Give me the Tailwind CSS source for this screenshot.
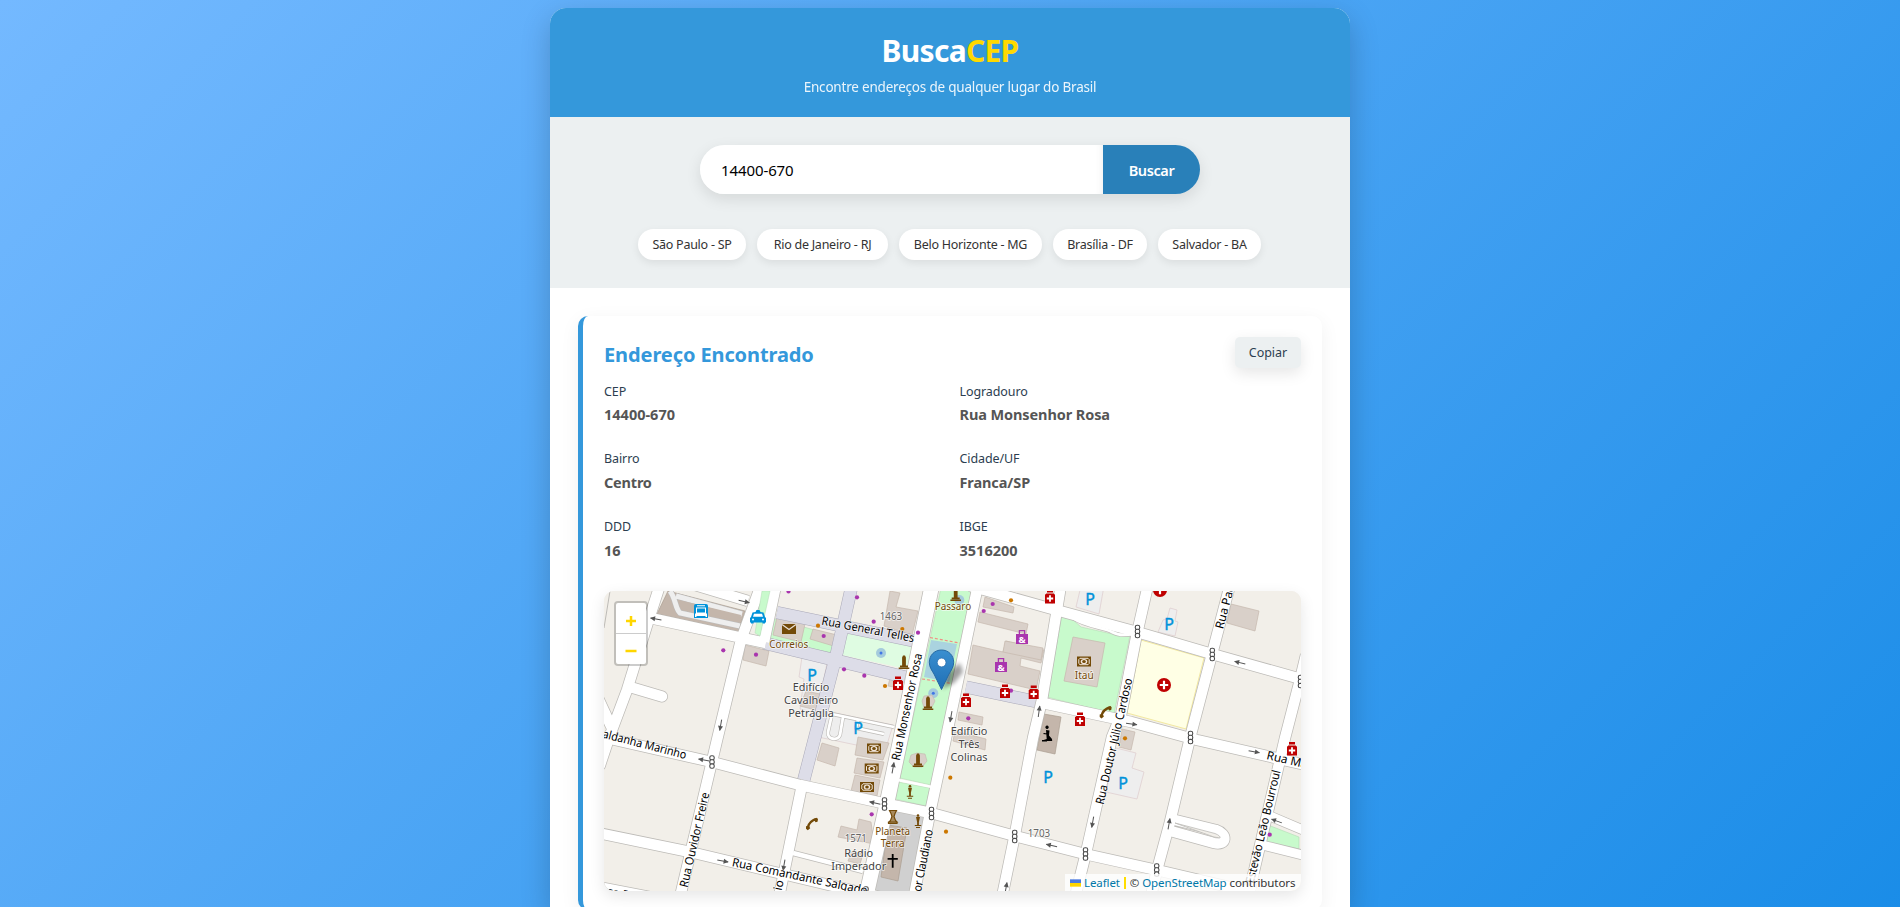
<!DOCTYPE html>
<html lang="pt-BR">
<head>
<meta charset="utf-8">
<title>BuscaCEP</title>
<script src="https://cdn.jsdelivr.net/npm/@tailwindcss/browser@4"></script>
</head>
<body class="h-[907px] overflow-hidden bg-linear-135/srgb from-[#74b9ff] to-[#0984e3] bg-[length:1900px_1450px] pt-2 font-['Noto_Sans',sans-serif] text-[#2d3436]">
<main class="mx-auto h-[899px] w-[800px] overflow-hidden rounded-t-[16px] bg-white shadow-[0_10px_30px_rgba(0,0,0,0.2)]">
  <header class="flex h-[109px] flex-col items-center bg-[#3498db] pt-[21px] text-white">
    <h1 class="text-[30px] leading-[44px] font-bold tracking-[-0.7px]">Busca<span class="text-[#ffd900]">CEP</span></h1>
    <p class="mt-[4px] text-[13.5px] leading-[20px] tracking-[-0.2px] opacity-90">Encontre endereços de qualquer lugar do Brasil</p>
  </header>

  <section class="flex h-[171px] flex-col items-center bg-[#ecf0f1] pt-7">
    <form class="flex h-[49px] w-[500px] overflow-hidden rounded-full shadow-[0_5px_15px_rgba(0,0,0,0.1)]">
      <div class="flex flex-1 items-center bg-white pt-[2px] pl-[21px] text-[15px] tracking-[-0.1px] text-black shadow-[inset_-8px_0_8px_-8px_rgba(0,0,0,0.08)]">14400-670</div>
      <button type="button" class="w-[97px] bg-[#2980b9] pt-[2px] text-[14.5px] font-semibold tracking-[-0.4px] text-white">Buscar</button>
    </form>
    <div class="mt-[35px] mr-[1px] flex gap-[11px] text-[12.5px] tracking-[-0.25px] text-[#333]">
      <span class="flex h-[31px] w-[108px] items-center justify-center rounded-full bg-white pt-[2px] whitespace-nowrap shadow-[0_3px_8px_rgba(0,0,0,0.08)]">São Paulo - SP</span>
      <span class="flex h-[31px] w-[131px] items-center justify-center rounded-full bg-white pt-[2px] whitespace-nowrap shadow-[0_3px_8px_rgba(0,0,0,0.08)]">Rio de Janeiro - RJ</span>
      <span class="flex h-[31px] w-[143px] items-center justify-center rounded-full bg-white pt-[2px] whitespace-nowrap shadow-[0_3px_8px_rgba(0,0,0,0.08)]">Belo Horizonte - MG</span>
      <span class="flex h-[31px] w-[94px] items-center justify-center rounded-full bg-white pt-[2px] whitespace-nowrap shadow-[0_3px_8px_rgba(0,0,0,0.08)]">Brasília - DF</span>
      <span class="flex h-[31px] w-[103px] items-center justify-center rounded-full bg-white pt-[2px] whitespace-nowrap shadow-[0_3px_8px_rgba(0,0,0,0.08)]">Salvador - BA</span>
    </div>
  </section>

  <section class="px-7 pt-7">
    <article class="h-[594px] rounded-[10px] border-l-[5px] border-[#3498db] bg-white pt-[21px] pr-[21px] pl-[21px] shadow-[0_5px_20px_rgba(0,0,0,0.06)]">
      <div class="flex h-[43px] items-start justify-between">
        <h2 class="pt-[3px] text-[20px] leading-[29px] font-bold tracking-[-0.1px] text-[#3498db]">Endereço Encontrado</h2>
        <button type="button" class="h-[31px] w-[66px] rounded-[5px] bg-[#ecf0f1] pt-[2px] text-[12.5px] tracking-[-0.05px] text-[#2c3e50] shadow-[0_5px_15px_rgba(0,0,0,0.1)]">Copiar</button>
      </div>
      <dl class="grid grid-cols-2 gap-x-[14px] text-[#2c3e50]">
        <div class="h-[67px]"><dt class="pt-[1px] text-[12.5px] leading-[22px] tracking-[-0.1px]">CEP</dt><dd class="text-[14.5px] leading-[23px] font-bold text-[#555]">14400-670</dd></div>
        <div class="h-[67px]"><dt class="pt-[1px] text-[12.5px] leading-[22px] tracking-[-0.1px]">Logradouro</dt><dd class="text-[14.5px] leading-[23px] font-bold tracking-[-0.1px] text-[#555]">Rua Monsenhor Rosa</dd></div>
        <div class="h-[68px]"><dt class="pt-[1px] text-[12.5px] leading-[22px] tracking-[-0.1px]">Bairro</dt><dd class="text-[14.5px] leading-[25px] font-bold tracking-[-0.2px] text-[#555]">Centro</dd></div>
        <div class="h-[68px]"><dt class="pt-[1px] text-[12.5px] leading-[22px] tracking-[-0.1px]">Cidade/UF</dt><dd class="text-[14.5px] leading-[25px] font-bold tracking-[-0.1px] text-[#555]">Franca/SP</dd></div>
        <div class="h-[76px]"><dt class="pt-[1px] text-[12.5px] leading-[22px] tracking-[-0.1px]">DDD</dt><dd class="text-[14.5px] leading-[24px] font-bold text-[#555]">16</dd></div>
        <div class="h-[76px]"><dt class="pt-[1px] text-[12.5px] leading-[22px] tracking-[-0.1px]">IBGE</dt><dd class="text-[14.5px] leading-[24px] font-bold text-[#555]">3516200</dd></div>
      </dl>

      <div class="relative h-[300px] overflow-hidden rounded-[10px] bg-[#f2efe9] shadow-[0_5px_15px_rgba(0,0,0,0.1)]">
        <svg class="block h-[300px] w-[697px]" viewBox="604 591 697 300" font-family="Noto Sans, sans-serif">
          <defs>
            <g id="arL"><path d="M-5.5 0H5.5" stroke="#555" stroke-width="1"/><path d="M-6 0l5-2.5v5z" fill="#555"/></g>
            <g id="tl" fill="#fff" stroke="#4a4a4a" stroke-width="1.1"><rect x="-2.2" y="-6.3" width="4.4" height="4.4" rx="1.8"/><rect x="-2.2" y="-2.2" width="4.4" height="4.4" rx="1.8"/><rect x="-2.2" y="1.9" width="4.4" height="4.4" rx="1.8"/></g>
            <g id="ph"><path d="M-3-7h6v2.6h-6zM-3.6-3.6h7.2L5-2.2V6.5H-5V-2.2z" fill="#bf0000"/><path d="M-.9-1.8H.9V.6H3.2V2.4H.9V4.8H-.9V2.4H-3.2V.6H-.9z" fill="#fff"/></g>
            <g id="hs"><circle r="7" fill="#bf0000"/><path d="M-1.1-4.2H1.1V-1.1H4.2V1.1H1.1V4.2H-1.1V1.1H-4.2V-1.1H-1.1z" fill="#fff"/></g>
            <g id="bk"><rect x="-7" y="-5" width="14" height="10" fill="#734a08"/><path d="M-4-3.2H4L5.2-2V2L4 3.200H-4L-5.200 2V-2z" fill="none" stroke="#f0e6dc" stroke-width="1"/><ellipse rx="3.300" ry="2.600" fill="#f0e6dc"/><ellipse rx="1.800" ry="1.500" fill="#734a08"/></g>
            <g id="ft"><circle r="5" fill="#a5cbdc"/><circle r="1.5" fill="#4176e6"/></g>
            <g id="st" fill="#734a08"><path d="M-1.9 4V-4.5L-1-6.500H1L1.900-4.500V4zM-4 3.400h8v1.800h-8zM-5.300 5.400H5.300V7H-5.300z"/></g>
            <g id="bs" fill="#734a08"><circle cy="-5.5" r="1.3"/><path d="M-2-4h4L.9 1v3H-.9V1zM-3.200 4h6.400v1h-6.400zM-2 6h4v1h-4z"/></g>
            <g id="sh"><path d="M-2.600-2.500V-6.300H2.600V-2.500" fill="none" stroke="#a935ae" stroke-width="1.300"/><rect x="-6" y="-3" width="12" height="10" fill="#a935ae"/><text y="5.600" text-anchor="middle" font-size="9.500" font-weight="700" fill="#fff">&amp;</text></g>
            <g id="tp"><path d="M-4.500 4.500C-3.500 0 0-3.500 4.500-4.500" fill="none" stroke="#734a08" stroke-width="2.400"/><path d="M1.500-5l3.500-1 1 1.500-.5 2.500-2 .5zM-6 2.500l3-.5 1.200 2.500L-4.200 6.500-6 5z" fill="#734a08"/></g>
          </defs>

          <rect x="604" y="591" width="697" height="300" fill="#f2efe9"/>

          <!-- green spaces and plots -->
          <g fill="#c8facc" stroke="#b3dcb6" stroke-width=".6">
            <path d="M941 588h31L931 785l-31-7z"/><path d="M898 782l32 6-4 18-31-7z"/>
            <path d="M1062 615l9 3 10 9 31 7 8-2 10 3-16 79-67-17z"/>
            <path d="M768 617l75 21-6 16-72-15z"/>
            <path d="M1268 825l31 12v12l-35-7z"/>
          </g>
          <path d="M847 632l65 13-5 24-65-14z" fill="#dffce2"/>
          <path d="M1141 640l63 18-18 71-59-16z" fill="#ffffe5" stroke="#f3e9a0" stroke-width="1"/>
          <path d="M890 810l34 7-13 75h-36z" fill="#d0d0d0"/>
          <path d="M931 640l26 4-8 38-25-5z" fill="#aad3df"/>
          <path d="M930 637.500l32 6M922 679l33 5" stroke="#f08f86" stroke-width="1.200" stroke-dasharray="3 2"/>

          <!-- parking areas -->
          <g fill="#eeeeee" stroke="#e0cfd0" stroke-width=".8">
            <path d="M802 657l25 6-10 50-17-4 4-30-5-2z"/>
            <path d="M826 711l67 14-8 26-67-14z"/>
            <path d="M1081 586h23l-5 28-23-7z"/>
            <path d="M1170 608l7 2-2 11 3 1-3 14-17-4 5-12 4-1z"/>
            <path d="M1116 748l20 5-4 15 12 4-7 27-31-7z"/>
          </g>

          <!-- buildings -->
          <g fill="#d9d0c9" stroke="#c5b8ae" stroke-width=".7">
            <path d="M777 617l28 7-4 18-28-7z"/><path d="M813 629l28 7-4 11-27-8z"/><path d="M745 645l24 6-3 15-23-6z"/>
            <path d="M806 691l14 3-4 16-16-4z"/>
            <path d="M890 591l10 2-4 14 22 4-6 24-28-9z"/><path d="M890 678l6 1-2 8-6-1z"/>
            <path d="M985 597l29 10-1 6-30-6zM980 612l48 12-2 10-48-12zM973 645l30 7 3-11 38 9-3 13-20-5-1 8 20 5-4 19-68-16z"/>
            <path d="M1005 641l38 7-2 12-38-8z"/>
            <path d="M1073 637l32 6-8 44-33-6z"/>
            <path d="M959 712l24 5-1 8-24-5zM955 731l31 8-1 11-32-9z"/>
            <path d="M822 743l17 5-4 18-18-6zM858 737l31 6-6 17-28-5zM857 758l27 4-4 16-26-5zM855 775l25 5-3 16-26-5z"/>
            <path d="M859 819l12 3 3 22-36-7 3-11 16 4zM852 851l11 3-3 10-12-3z"/>
            <path d="M1231 604l28 7-4 20-28-8z"/><path d="M1122 729l13 3-4 18-12-3z"/>
          </g>
          <g fill="#c4b6ab" stroke="#ab9d90" stroke-width=".7">
            <path d="M668 591l77 20-7 21-81-18z"/><path d="M888 825l19 3-9 53-17-4z"/><path d="M1044 714l17 3-6 37-18-4z"/>
          </g>
          <path d="M670 591c6 8 5 17 10 22l60 13M676 596l66 18" fill="none" stroke="#bbb" stroke-width="6"/>
          <path d="M670 591c6 8 5 17 10 22l60 13M676 596l66 18" fill="none" stroke="#eee" stroke-width="5"/>
          <path d="M679 600l62 15-1 6-59-13z" fill="#c4b6ab"/>

          <!-- pedestrian streets -->
          <g fill="none" stroke="#aaa9b8" stroke-width="13">
            <path d="M777 612.500L914 641M764 643L905 677M966 687L1038 702M852 585L837 652L803 783"/>
          </g>
          <g fill="none" stroke="#dddde8" stroke-width="12">
            <path d="M777 612.500L914 641M764 643L905 677M966 687L1038 702M852 585L837 652L803 783"/>
          </g>

          <!-- street casings -->
          <g fill="none" stroke="#bdbbb7" stroke-linejoin="round">
            <g stroke-width="12">
              <path d="M660 585L648 622 627 690 609 738 600 765M598 698L611 726M630 687L662 696.500" stroke-linecap="round"/>
              <path d="M650 618L766 643M695 585L748 601M761 585L741 640 717 740 680 897M776 585L764 642"/>
              <path d="M970 586L1056 610 1137 632 1212 654 1301 679M1038 702L1131 722 1197 740 1306 765"/>
              <path d="M598 736L712 762 800 785 887 804 931 813 1015 836 1085 854 1157 870 1255 893"/>
              <path d="M598 833L690 852 787 875 880 897M598 887L650 897"/>
              <path d="M978 585L946 738 930 813 914 896M1061 585L1042 700 1033 738 1015 834 1002 897M1148 585L1136 638 1121 715 1112 737 1086 853 1075 897M1230 585L1212 654 1190 738 1170 822 1157 870 1151 896M1306 655L1300 680 1285 738 1248 897M802 785L779 897"/>
              <path d="M1171 819L1216 830C1228 834 1227 846 1214 843L1167 830"/>
            </g>
            <path d="M932 585L901 737 887 803 866 897" stroke-width="16"/>
            <path d="M1270 816L1303 830M1262 845L1303 855" stroke-width="10.500"/>
            <path d="M793 853L863 871" stroke-width="6"/>
            <path d="M832 714L828 732C827 740 838 741 840 735L843 717M832 714L894 727M858 720L856 728 884 734" stroke-width="4"/>
            <path d="M1073 618C1083 626 1105 628 1112 632S1128 635 1133 634" stroke-width="4"/>
          </g>
          <g fill="none" stroke="#fff" stroke-linejoin="round">
            <g stroke-width="10.500">
              <path d="M660 585L648 622 627 690 609 738 600 765M598 698L611 726M630 687L662 696.500" stroke-linecap="round"/>
              <path d="M650 618L766 643M695 585L748 601M761 585L741 640 717 740 680 897M776 585L764 642"/>
              <path d="M970 586L1056 610 1137 632 1212 654 1301 679M1038 702L1131 722 1197 740 1306 765"/>
              <path d="M598 736L712 762 800 785 887 804 931 813 1015 836 1085 854 1157 870 1255 893"/>
              <path d="M598 833L690 852 787 875 880 897M598 887L650 897"/>
              <path d="M978 585L946 738 930 813 914 896M1061 585L1042 700 1033 738 1015 834 1002 897M1148 585L1136 638 1121 715 1112 737 1086 853 1075 897M1230 585L1212 654 1190 738 1170 822 1157 870 1151 896M1306 655L1300 680 1285 738 1248 897M802 785L779 897"/>
              <path d="M1171 819L1216 830C1228 834 1227 846 1214 843L1167 830"/>
            </g>
            <path d="M932 585L901 737 887 803 866 897" stroke-width="14.500"/>
            <path d="M1270 816L1303 830M1262 845L1303 855" stroke-width="9"/>
            <path d="M793 853L863 871" stroke-width="4.500"/>
            <path d="M832 714L828 732C827 740 838 741 840 735L843 717M832 714L894 727M858 720L856 728 884 734" stroke-width="2.800"/>
            <path d="M1073 618C1083 626 1105 628 1112 632S1128 635 1133 634" stroke-width="2.800"/>
            <path d="M898 780l34 7" stroke-width="2.500"/>
          </g>
          <path d="M1175 823L1215 833.500Q1221 836 1220 838L1214 837z" fill="#f2efe9" stroke="#bdbbb7" stroke-width=".8"/>
          <path d="M610 591L604 628" stroke="#bdbbb7" stroke-width="1"/>
          <path d="M762 591h8l-10 45-5-3z" fill="#c8facc" stroke="#b3dcb6" stroke-width=".5"/>

          <!-- direction arrows -->
          <use href="#arL" transform="translate(656 619) rotate(10)"/><use href="#arL" transform="translate(704 760) rotate(10)"/><use href="#arL" transform="translate(875 803) rotate(12)"/><use href="#arL" transform="translate(1051.700 845.500) rotate(12)"/><use href="#arL" transform="translate(1240 662.700) rotate(14)"/><use href="#arL" transform="translate(1276.700 821) rotate(20)"/>
          <use href="#arL" transform="translate(744 601.500) rotate(192)"/><use href="#arL" transform="translate(722.700 861) rotate(190)"/><use href="#arL" transform="translate(1131.500 724) rotate(188)"/><use href="#arL" transform="translate(1254 751.700) rotate(190)"/>
          <use href="#arL" transform="translate(720.700 725) rotate(-80)"/><use href="#arL" transform="translate(784 865) rotate(-80)"/><use href="#arL" transform="translate(951 716.500) rotate(-80)"/><use href="#arL" transform="translate(1092.700 822) rotate(-80)"/>
          <use href="#arL" transform="translate(893 768) rotate(100)"/><use href="#arL" transform="translate(1006 888) rotate(100)"/><use href="#arL" transform="translate(1039 711.500) rotate(98)"/><use href="#arL" transform="translate(1169 824) rotate(100)"/>

          <!-- traffic signals -->
          <use href="#tl" x="712" y="762"/><use href="#tl" x="884.500" y="804"/><use href="#tl" x="931.500" y="813.500"/><use href="#tl" x="1014.700" y="836.500"/><use href="#tl" x="1085.500" y="854"/><use href="#tl" x="1156.700" y="870"/><use href="#tl" x="1137.500" y="631.500"/><use href="#tl" x="1212.300" y="654.500"/><use href="#tl" x="1300.500" y="681.500"/><use href="#tl" x="1190.500" y="737.500"/><use href="#tl" x="866" y="893"/>

          <!-- shops and offices -->
          <g fill="#a935ae"><circle cx="788.500" cy="591.500" r="2.100"/><circle cx="723.300" cy="650.300" r="2.100"/><circle cx="756" cy="654.700" r="2.100"/><circle cx="823.700" cy="636" r="2.100"/><circle cx="857" cy="597.300" r="2.100"/><circle cx="873.700" cy="621.700" r="2.100"/><circle cx="918" cy="632.700" r="2.100"/><circle cx="844" cy="669.300" r="2.100"/><circle cx="864.300" cy="675.700" r="2.100"/><circle cx="992.700" cy="604" r="2.100"/><circle cx="983.700" cy="611" r="2.100"/><circle cx="1011" cy="690.700" r="2.100"/><circle cx="968.300" cy="718.300" r="2.100"/><circle cx="871.700" cy="814.300" r="2.100"/><circle cx="1269.700" cy="834.700" r="2.100"/></g>
          <g fill="#cc7700"><circle cx="818" cy="625.700" r="2.100"/><circle cx="902.300" cy="629" r="2.100"/><circle cx="885" cy="686" r="2.100"/><circle cx="1011" cy="600.300" r="2.100"/><circle cx="950.300" cy="777.700" r="2.100"/><circle cx="946" cy="831.700" r="2.100"/><circle cx="1125" cy="738.300" r="2.100"/></g>

          <!-- fountains and monuments -->
          <circle cx="959.300" cy="600" r="5" fill="#a5cbdc"/><use href="#ft" x="881" y="653"/><use href="#ft" x="933.300" y="693.300"/>
          <g fill="#d9d0c9" stroke="#c5b8ae" stroke-width=".6"><path d="M924 696l8-1 3 6-4 8-7-1-2-7z"/><path d="M911 755l6-2 8 1 2 7-5 6h-8l-5-5z"/></g>
          <use href="#st" x="904" y="662"/><use href="#st" x="928" y="703"/><use href="#st" x="955.700" y="594"/><use href="#st" x="918" y="760"/>
          <use href="#bs" x="910" y="791.700"/><use href="#bs" x="918" y="821"/>
          <path d="M889.500 810.500h7l-1.500 3-1 3 1.500 4 1.500 1.500h-8l1.500-1.500 1.500-4-1-3zM888.500 822h8.500v1.500h-8.500z" fill="#a98a5c" stroke="#734a08" stroke-width="1.200"/>

          <!-- points of interest -->
          <use href="#ph" x="898" y="683.500"/><use href="#ph" x="966" y="700.500"/><use href="#ph" x="1005" y="691.500"/><use href="#ph" x="1050" y="597"/><use href="#ph" x="1033.700" y="692.500"/><use href="#ph" x="1080" y="719.500"/><use href="#ph" x="1292" y="749"/>
          <use href="#hs" x="1164" y="685"/><use href="#hs" x="1160" y="590"/>
          <use href="#bk" x="874" y="748.500"/><use href="#bk" x="871.700" y="768.500"/><use href="#bk" x="867" y="787"/><use href="#bk" x="1084" y="661.500"/>
          <use href="#sh" x="1001" y="665"/><use href="#sh" x="1022" y="637"/>
          <use href="#tp" x="812" y="823.700"/><use href="#tp" x="1105.700" y="712"/>
          <g fill="#0092da">
            <path d="M696 604h10q2 0 2 2v12h-14v-12q0-2 2-2z"/>
            <path d="M755.500 612l1-2h3l1 2 3 .5 1.500 4.500 1 1v4.500h-1v1h-2.500v-1h-9v1H751v-1h-1v-4.500l1-1 1.500-4.500z"/>
          </g>
          <path d="M697 605.300h8v1h-8zM696 607.500h10v6h1v3.500h-1.500v-1h-9v1H695v-3.500h1z" fill="#fff"/><path d="M697 608.500h8v4h-8z" fill="#0092da"/>
          <path d="M754 613.800h8l1 3h-10z" fill="#fff"/><circle cx="753" cy="619.500" r="1" fill="#fff"/><circle cx="763" cy="619.500" r="1" fill="#fff"/>
          <rect x="782" y="624" width="14" height="10" fill="#734a08"/><path d="M782 624.500l7 5 7-5" fill="none" stroke="#e8dfd6" stroke-width="1.300"/>
          <path d="M891.800 854h1.800v4h4.200v1.800h-4.200v8h-1.800v-8h-4.200V858h4.200z" fill="#000"/>
          <path d="M1047 729a1.700 1.700 0 1 1 .1 0zM1046 730l3.500.5-.5 5 3 3.500.2 2h-7.500l-1-1 3-1zM1044 733l3 .5v1l-4-.5zM1042 740h5v1.500h-5z" fill="#000"/>

          <g font-size="16" fill="#0092da" stroke="#0092da" stroke-width=".4" text-anchor="middle"><text x="812" y="681">P</text><text x="858" y="734.300">P</text><text x="1090" y="605">P</text><text x="1169" y="630">P</text><text x="1048" y="783">P</text><text x="1123" y="789">P</text></g>

          <!-- street names -->
          <g font-size="11.800" fill="#000" stroke="#fff" stroke-opacity=".75" stroke-width="1.400" paint-order="stroke">
            <text transform="translate(821 624.500) rotate(10.800)" textLength="94" lengthAdjust="spacingAndGlyphs">Rua General Telles</text>
            <text transform="translate(899.500 761) rotate(-78)" textLength="109" lengthAdjust="spacingAndGlyphs">Rua Monsenhor Rosa</text>
            <text transform="translate(687.500 888) rotate(-77)" textLength="97" lengthAdjust="spacingAndGlyphs">Rua Ouvidor Freire</text>
            <text transform="translate(602 737.500) rotate(14.500)" textLength="86" lengthAdjust="spacingAndGlyphs">aldanha Marinho</text>
            <text transform="translate(731.500 866) rotate(12)" textLength="138" lengthAdjust="spacingAndGlyphs">Rua Comandante Salgado</text>
            <text transform="translate(781.500 891) rotate(-78)">io</text>
            <text transform="translate(921 892) rotate(-79)" textLength="63" lengthAdjust="spacingAndGlyphs">or Claudiano</text>
            <text transform="translate(1103.500 805) rotate(-77)" textLength="129" lengthAdjust="spacingAndGlyphs">Rua Doutor Júlio Cardoso</text>
            <text transform="translate(1223 629.500) rotate(-75)">Rua Pac</text>
            <text transform="translate(1266 759) rotate(13)">Rua Ma</text>
            <text transform="translate(1253.500 884) rotate(-76.500)" textLength="116" lengthAdjust="spacingAndGlyphs">Estevão Leão Bourroul</text>
            <text transform="translate(601 894) rotate(11)">ssa R</text>
          </g>

          <!-- place names -->
          <g text-anchor="middle" stroke="#fff" stroke-opacity=".7" stroke-width="1.600" paint-order="stroke">
            <g fill="#734a08" font-size="10.500">
              <text x="788.700" y="648" textLength="39" lengthAdjust="spacingAndGlyphs">Correios</text><text x="953" y="610" textLength="36.500" lengthAdjust="spacingAndGlyphs">Passaro</text><text x="1084.300" y="678.500" textLength="19" lengthAdjust="spacingAndGlyphs">Itaú</text>
              <text x="892.700" y="835" textLength="35" lengthAdjust="spacingAndGlyphs">Planeta</text><text x="892.700" y="847" textLength="24" lengthAdjust="spacingAndGlyphs">Terra</text>
            </g>
            <g fill="#444" font-size="11">
              <text x="811" y="691" textLength="36.500" lengthAdjust="spacingAndGlyphs">Edifício</text><text x="811" y="704.200" textLength="54" lengthAdjust="spacingAndGlyphs">Cavalheiro</text><text x="811" y="717.300" textLength="45.500" lengthAdjust="spacingAndGlyphs">Petráglia</text>
              <text x="969" y="734.500" textLength="36.500" lengthAdjust="spacingAndGlyphs">Edifício</text><text x="969" y="747.600" textLength="21" lengthAdjust="spacingAndGlyphs">Três</text><text x="969" y="761" textLength="37" lengthAdjust="spacingAndGlyphs">Colinas</text>
              <text x="858.700" y="856.700" textLength="29" lengthAdjust="spacingAndGlyphs">Rádio</text><text x="858.700" y="869.500" textLength="55" lengthAdjust="spacingAndGlyphs">Imperador</text>
            </g>
            <g fill="#666" font-size="10"><text x="891" y="620" textLength="22.500" lengthAdjust="spacingAndGlyphs">1463</text><text x="855.700" y="841.700" textLength="22" lengthAdjust="spacingAndGlyphs">1571</text><text x="1039" y="837" textLength="22.500" lengthAdjust="spacingAndGlyphs">1703</text></g>
          </g>

          <!-- location marker -->
          <defs>
            <linearGradient id="pin" x1="0" y1="0" x2="0" y2="1"><stop offset="0" stop-color="#3a8fd0"/><stop offset="1" stop-color="#1f6fb5"/></linearGradient>
            <filter id="soft" x="-50%" y="-50%" width="200%" height="200%"><feGaussianBlur stdDeviation="2.200"/></filter>
          </defs>
          <path d="M942 689l6-17 12-9 3 9-9 11z" fill="#000" opacity=".38" filter="url(#soft)"/>
          <path d="M941.500 650C934.500 650 929.300 655.400 929.300 662.200c0 5 2.400 7.800 4.700 11.800l7.500 15.500 7.500-15.500c2.300-4 4.700-6.800 4.700-11.800C953.700 655.400 948.500 650 941.500 650z" fill="url(#pin)" stroke="#2569a3" stroke-width="1"/>
          <circle cx="941.600" cy="662.500" r="4.400" fill="#fff" stroke="#2a6fae" stroke-width=".8"/>
        </svg>

        <div class="absolute top-[10px] left-[10px] flex w-[34px] flex-col rounded-[4px] border-2 border-black/20 bg-white bg-clip-padding">
          <button type="button" class="flex h-[31px] items-center justify-center border-b border-[#ccc] pt-[5px]" aria-label="Aproximar"><svg class="size-3" viewBox="0 0 12 12"><path d="M6 1v10M1 6h10" stroke="#ffd600" stroke-width="2.500"/></svg></button>
          <button type="button" class="flex h-[30px] items-center justify-center pt-[4px]" aria-label="Afastar"><svg class="size-3" viewBox="0 0 12 12"><path d="M.5 6h11" stroke="#ffd600" stroke-width="2.500"/></svg></button>
        </div>
        <div class="absolute right-0 bottom-0 flex h-[17px] w-[236px] items-center bg-white/80 pl-[5px] text-[11.5px] tracking-[-0.1px] whitespace-nowrap text-[#333]">
          <svg class="mr-[3px] h-2 w-[11px]" viewBox="0 0 12 8"><path fill="#4c7be1" d="M0 0h12v4H0z"/><path fill="#ffd500" d="M0 4h12v4H0z"/></svg>
          <span class="text-[#0078a8]">Leaflet</span><span class="mx-[4px] h-3 w-[2px] bg-[#ffdd00]"></span><span>© <span class="text-[#0078a8]">OpenStreetMap</span> contributors</span>
        </div>
      </div>
    </article>
  </section>
</main>
</body>
</html>
